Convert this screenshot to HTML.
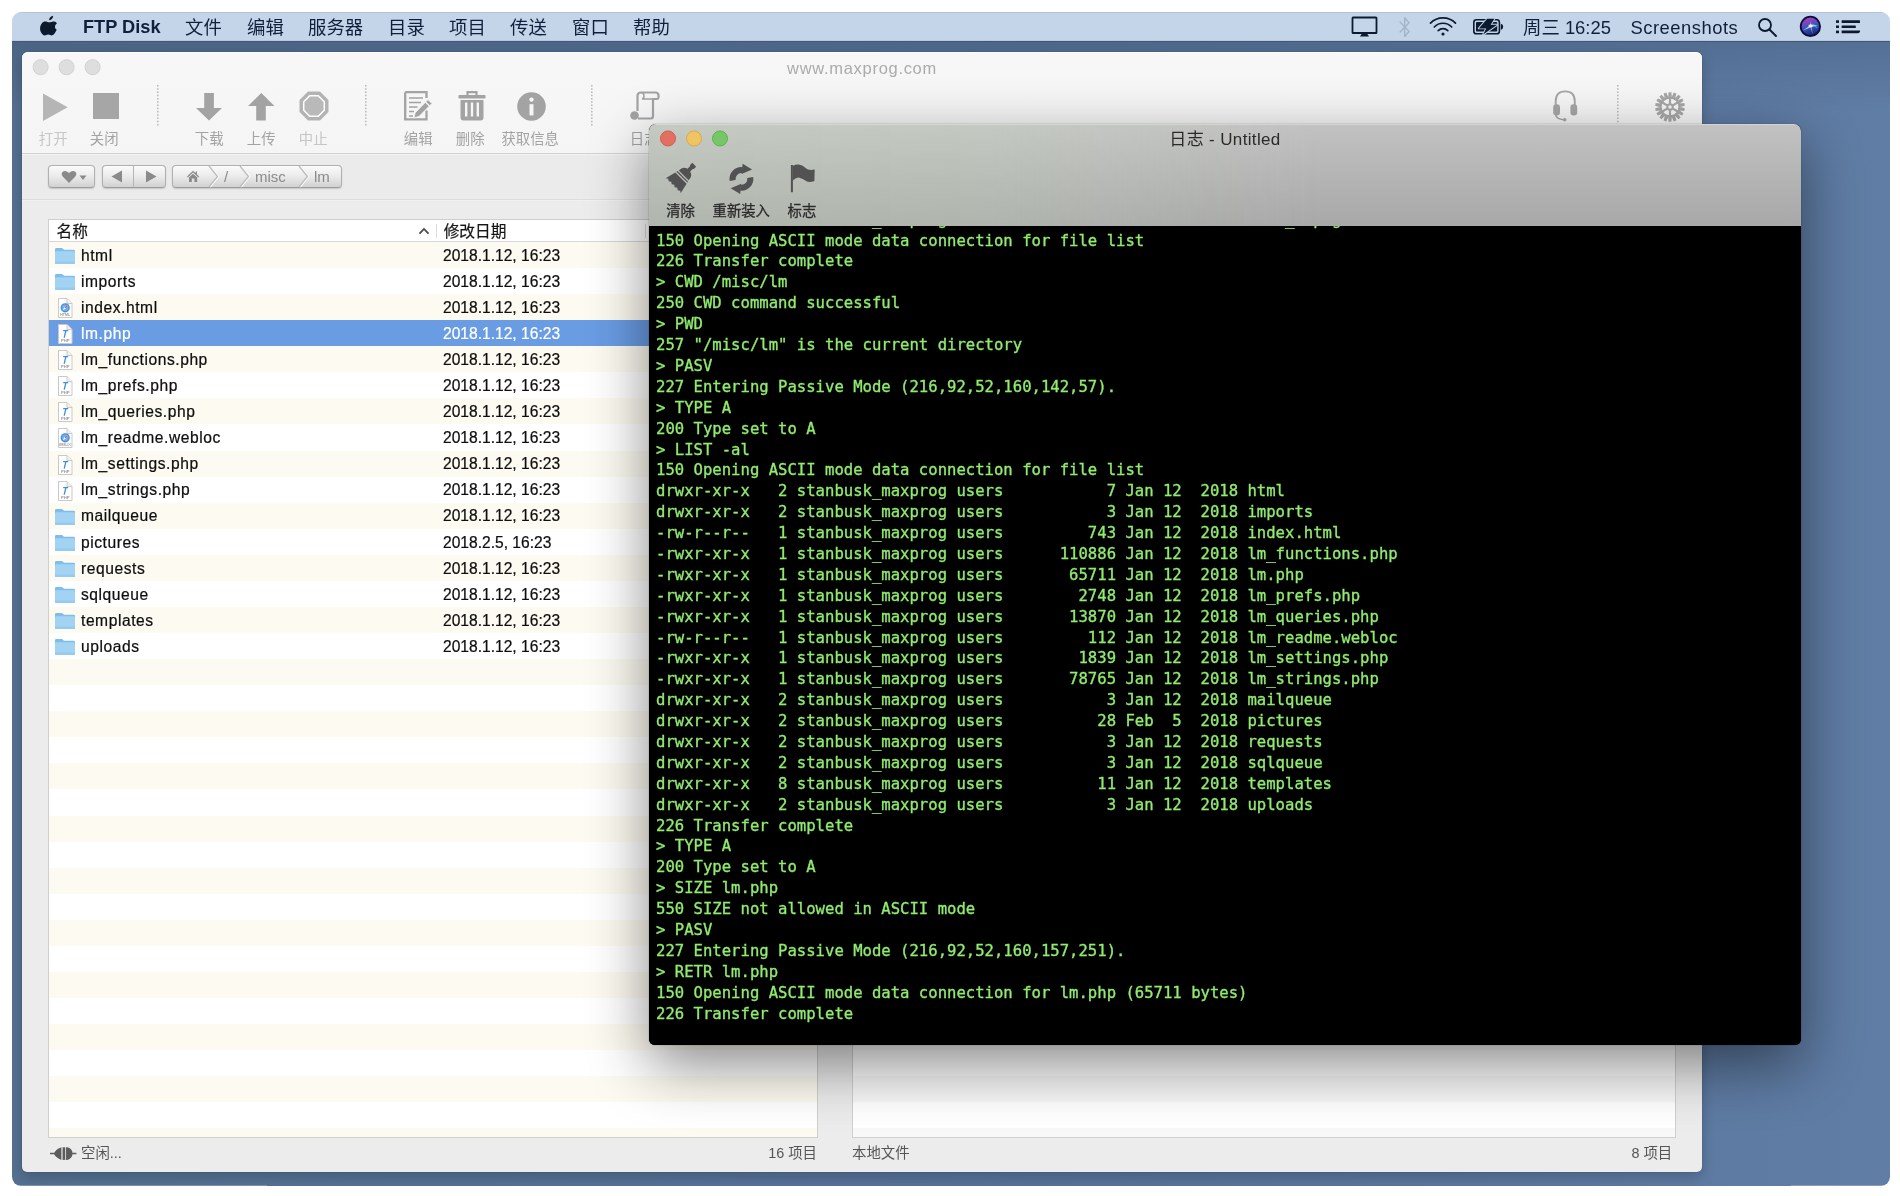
<!DOCTYPE html>
<html lang="zh-CN"><head><meta charset="utf-8"><title>FTP Disk</title>
<style>
html,body{margin:0;padding:0;background:#fff;}
body{width:1900px;height:1196px;position:relative;overflow:hidden;font-family:"Liberation Sans","Noto Sans CJK SC",sans-serif;color:#222;}
*{box-sizing:border-box;}
.abs,#screen *{position:absolute;}
#screen{will-change:transform;position:absolute;left:0;top:0;width:1900px;height:1196px;clip-path:inset(12px 10px 10.2px 12px round 9px);background:linear-gradient(180deg,rgba(10,20,40,.13) 41px,rgba(10,20,40,.10) 52px,rgba(10,20,40,0) 110px),linear-gradient(90deg,#557091 0%,#57739a 55%,#5b789f 80%,#607da5 100%);}
#screen svg{overflow:visible;}
#screen text, #screen tspan{position:static;}
/* menubar */
#menubar{left:12px;top:12px;width:1878px;height:29px;background:#c4d5e9;border-bottom:1px solid #b7c9de;border-top:1px solid #b3c4d9;box-shadow:0 1px 0 #435878;}
.mi{top:12.5px;height:29px;line-height:29px;font-size:18.4px;color:#10203a;white-space:nowrap;}
.mi.b{font-weight:bold;font-size:18.2px;}
/* main window */
#main{left:22px;top:52px;width:1680px;height:1119.6px;border-radius:6px 6px 5px 5px;background:#ececec;box-shadow:0 5px 14px rgba(0,0,0,.2),0 0 1px rgba(0,0,0,.45);}
#mainin{left:-22px;top:-52px;width:1900px;height:1196px;}
#mtop{left:22px;top:52px;width:1680px;height:102px;border-radius:6px 6px 0 0;background:linear-gradient(#f7f7f7,#f5f5f5);border-bottom:1px solid #d2d2d2;border-top:1px solid #fdfdfd;}
#mpath{left:22px;top:154px;width:1680px;height:46px;background:#ebebeb;border-bottom:1px solid #dddddd;box-shadow:0 1px 0 #f1f1f1;border-top:1px solid #f4f4f4;}
.tlm{width:15.6px;height:15.6px;border-radius:50%;background:#dedede;border:1px solid #d2d2d2;top:59px;transform:translate(-.4px,.2px);}
#mtitle{left:662px;top:56px;width:400px;text-align:center;font-size:16.5px;letter-spacing:.7px;color:#ababab;line-height:24px;white-space:nowrap;}
.tbl{top:127.8px;margin-left:-.8px;height:22px;line-height:22px;font-size:14.400px;color:#a3a3a3;text-align:center;width:80px;white-space:nowrap;}
.tbl.dis{color:#c6c6c6;}
.sep{width:1.5px;top:85px;height:41px;background:repeating-linear-gradient(#a9a9a9 0,#a9a9a9 1.7px,transparent 1.7px,transparent 3.26px);}
/* path buttons */
.pbtn{top:165px;height:23px;border-radius:4px;border:1px solid #b0b0b0;border-bottom-color:#9c9c9c;background:linear-gradient(#fbfbfb,#eaeaea 50%,#d2d2d2);box-shadow:0 1px 1.5px rgba(0,0,0,.16);}
.ptxt{top:165px;height:23px;line-height:23px;font-size:15px;color:#8a8a8a;}
/* file list */
#list{left:48px;top:219px;width:770px;height:919px;background:#fff;border:1px solid #cfcfcf;overflow:hidden;}
#rlist{left:852px;top:219px;width:824px;height:919px;background:#fff;border:1px solid #cfcfcf;overflow:hidden;}
#lhead{left:0;top:0;width:768px;height:22px;background:#fff;border-bottom:1px solid #d8d8d8;}
.hd{top:0;height:22px;line-height:23px;font-size:15.7px;color:#161616;-webkit-text-stroke:.2px #161616;}
.row{left:0;width:768px;height:26.07px;}
.row.odd{background:#fdfbf1;}
.row.sel{background:#6a9ce4;}
.row .fi{left:5px;top:3px;}
.row svg.fi[height="18"]{top:5.2px;left:5.3px;}
.row .nm{left:32px;top:.8px;letter-spacing:.56px;line-height:26px;font-size:15.6px;color:#0e0e0e;white-space:nowrap;}
.row .dt{left:394px;top:.8px;line-height:26px;font-size:15.6px;color:#0e0e0e;white-space:nowrap;}
.row .nm,.row .dt{-webkit-text-stroke:.22px #0e0e0e;}
.row.sel .nm,.row.sel .dt{color:#fff;-webkit-text-stroke:.22px #fff;}
.st{top:1142.3px;height:22px;line-height:22px;font-size:14.4px;color:#555;white-space:nowrap;}
/* log window */
#log{left:649px;top:124px;width:1152px;height:921px;border-radius:7px 7px 6px 6px;background:#000;box-shadow:0 20px 60px rgba(0,0,0,.47),0 0 1px rgba(0,0,0,.7);}
#login{left:0;top:0;width:1152px;height:921px;border-radius:7px 7px 6px 6px;overflow:hidden;}
#lhdr{left:0;top:0;width:1152px;height:102px;background:linear-gradient(#c2c2c2,#b6b6b6 45%,#a8a8a8);}
#lhdr2{left:0;top:0;width:1152px;height:102px;background:linear-gradient(90deg,rgba(205,228,195,.22) 0%,rgba(205,228,195,.2) 30%,rgba(205,228,195,0) 58%);border-top:1px solid rgba(255,255,255,.3);}
.tll{width:16px;height:16px;border-radius:50%;top:6px;transform:translateY(.45px);}
#ltitle{left:376px;top:4px;width:400px;text-align:center;font-size:17px;letter-spacing:.35px;color:#2a2a2a;line-height:24px;white-space:nowrap;}
.ltl{top:75.500px;height:22px;line-height:22px;font-size:14.300px;color:#2c2c2c;-webkit-text-stroke:.3px #2c2c2c;text-align:center;width:80px;white-space:nowrap;}
#term{left:0;top:102px;width:1152px;height:819px;background:#000;overflow:hidden;}
.tl{left:7px;height:20.89px;line-height:20.89px;font-family:"DejaVu Sans Mono","Liberation Mono",monospace;font-size:15.6px;color:#8fec6e;-webkit-text-stroke:.35px #8fec6e;white-space:pre;letter-spacing:0px;}

</style></head>
<body>
<div id="screen">
<div id="menubar"></div>
<svg style="left:40.200px;top:14.500px" width="19" height="22" viewBox="0 0 19 22"><path d="M13.2 0.6c.1 1.2-.4 2.4-1.1 3.2-.8.9-2 1.6-3.100 1.500-.1-1.200.5-2.400 1.200-3.100C11 1.300 12.300.700 13.200.600zM16.900 15.900c-.5 1.100-.7 1.600-1.400 2.600-.9 1.400-2.200 3.100-3.800 3.100-1.400 0-1.800-.9-3.700-.9s-2.400.9-3.800.9c-1.600 0-2.800-1.500-3.700-2.900C-2 14.800-.6 8.700 3.200 6.900c1.300-.6 2.400-.3 3.500.1.900.3 1.500.6 2.300.6.700 0 1.200-.2 2-.5 1.200-.5 2.600-.9 4.300-.1.800.3 1.500.9 2 1.700-2.900 1.700-2.600 5.900.4 7.200z" fill="#0c1a2e" transform="translate(0.8,0.3) scale(0.93)"/></svg>
<span class="mi b" style="left:83px">FTP Disk</span>
<span class="mi" style="left:185px">文件</span>
<span class="mi" style="left:247px">编辑</span>
<span class="mi" style="left:308px">服务器</span>
<span class="mi" style="left:388px">目录</span>
<span class="mi" style="left:449px">项目</span>
<span class="mi" style="left:510px">传送</span>
<span class="mi" style="left:572px">窗口</span>
<span class="mi" style="left:633px">帮助</span>
<!-- right status icons -->
<svg style="left:1351px;top:16px" width="27" height="22" viewBox="0 0 27 22"><rect x="1.500" y="1.500" width="24" height="15.500" rx="0.600" fill="none" stroke="#0c1a2e" stroke-width="1.800"/><path d="M9 20.500L11 17.500H16L18 20.500Z" fill="#0c1a2e"/></svg>
<svg style="left:1396.600px;top:15px" width="15.400" height="24.200" viewBox="0 0 14 22"><path d="M2.500 6L11 15L7 19.500V2.500L11 7L2.500 16" fill="none" stroke="#a3b4c8" stroke-width="1.250" stroke-linejoin="round"/></svg>
<svg style="left:1429px;top:15.200px" width="28" height="22" viewBox="0 0 28 22"><path d="M1.500 8.200A17.500 17.500 0 0 1 26.500 8.200" fill="none" stroke="#0c1a2e" stroke-width="1.700" stroke-linecap="round"/><path d="M5.300 12A12 12 0 0 1 22.700 12" fill="none" stroke="#0c1a2e" stroke-width="1.700" stroke-linecap="round"/><path d="M9.200 15.700A6.800 6.800 0 0 1 18.800 15.700" fill="none" stroke="#0c1a2e" stroke-width="1.700" stroke-linecap="round"/><circle cx="14" cy="19" r="1.600" fill="#0c1a2e"/></svg>
<svg style="left:1473.400px;top:18.700px" width="33" height="17" viewBox="0 0 33 17"><rect x="0.800" y="0.800" width="25.600" height="14" rx="2.600" fill="none" stroke="#0c1a2e" stroke-width="1.600"/><rect x="3" y="3" width="21.200" height="9.600" rx="0.800" fill="#0c1a2e"/><path d="M27.800 4.700Q30.200 5.400 30.200 7.800Q30.200 10.200 27.800 10.900Z" fill="#0c1a2e"/><path d="M14.200 -0.200H21.400L17.600 5.700H24.200L10.100 15.600L13.300 9.400H5.800Z" fill="#0c1a2e" stroke="#c4d5e9" stroke-width="1.900" paint-order="stroke" stroke-linejoin="round"/></svg>
<span class="mi" style="left:1523px">周三 16:25</span>
<span class="mi" style="left:1630.500px;letter-spacing:.5px">Screenshots</span>
<svg style="left:1757px;top:17px" width="21" height="21" viewBox="0 0 21 21"><circle cx="8" cy="8" r="6" fill="none" stroke="#0c1a2e" stroke-width="1.800"/><path d="M12.500 12.500L19 19" stroke="#0c1a2e" stroke-width="2" stroke-linecap="round"/></svg>
<svg style="left:1800px;top:16px" width="21" height="21" viewBox="0 0 21 21"><defs><linearGradient id="siri" x1="0.300" y1="0" x2="0.600" y2="1"><stop offset="0" stop-color="#b044b4"/><stop offset=".35" stop-color="#6a48c0"/><stop offset=".6" stop-color="#2c52b4"/><stop offset="1" stop-color="#171c6c"/></linearGradient></defs><circle cx="10.400" cy="10.400" r="9.700" fill="url(#siri)" stroke="#100b38" stroke-width="1.800"/><path d="M3.200 14.600Q7.500 11 10.300 9.600Q13.500 8.800 18 9.200Q14 10 11.500 11Q8 12 3.200 14.600Z" fill="#a8f0f4" opacity=".9"/><path d="M12.500 7.500Q16 8.800 17.800 12.200Q14.500 10.200 11 10Z" fill="#6fd8e0" opacity=".55"/><path d="M10.800 5Q11.200 9 12.800 18.200Q10.500 12 10 9.500Z" fill="#f0a0e0" opacity=".8"/><ellipse cx="10.600" cy="9.800" rx="2.200" ry="1.500" fill="#fff" opacity=".8"/></svg>
<svg style="left:1836px;top:19.700px" width="26" height="16" viewBox="0 0 26 16"><g fill="#0c1a2e"><rect x="0" y="0.300" width="3" height="2.600"/><rect x="0" y="5.500" width="3" height="2.500"/><rect x="0" y="10.600" width="3" height="2.600"/><rect x="5.600" y="0.300" width="18.400" height="2.600" rx="0.500"/><rect x="5.600" y="5.500" width="14.200" height="2.500" rx="0.500"/><path d="M5.600 10.600H24V11.600Q23.600 13.200 22 13.200H5.600Z"/></g></svg>

<div id="main"><div id="mainin">
<div id="mtop"></div>
<div id="mpath"></div>
<div class="tlm" style="left:33px"></div><div class="tlm" style="left:59px"></div><div class="tlm" style="left:85px"></div>
<div id="mtitle">www.maxprog.com</div>
<!-- toolbar icons -->
<svg style="left:43px;top:93px" width="26" height="29" viewBox="0 0 26 29"><path d="M0 0.500L24.700 14.300L0 28Z" fill="#b5b5b5"/></svg>
<svg style="left:93px;top:93px" width="26" height="26" viewBox="0 0 26 26"><rect width="26" height="26" fill="#a6a6a6"/></svg>
<svg style="left:156.5px;top:85px" width="2" height="42" viewBox="0 0 2 42"><line x1="0.800" y1="0" x2="0.800" y2="41" stroke="#b2b2b2" stroke-width="1.400" stroke-dasharray="1.500 1.760"/></svg>
<svg style="left:196px;top:93px" width="26" height="28" viewBox="0 0 26 28"><path d="M8.200 0H17.900V15H26L13 27.600L0 15H8.200Z" fill="#a3a3a3"/></svg>
<svg style="left:248px;top:93px" width="27" height="28" viewBox="0 0 27 28"><path d="M13.300 0L26.500 13H17.800V27.600H8.200V13H0Z" fill="#a3a3a3"/></svg>
<svg style="left:299px;top:91px" width="30" height="30" viewBox="0 0 30 30"><path d="M9 0.500H21L29.500 9V21L21 29.500H9L0.500 21V9Z" fill="#b3b3b3"/><path d="M10.700 4.700H19.300L25.300 10.700V19.300L19.300 25.300H10.700L4.700 19.300V10.700Z" fill="#b9b9b9" stroke="#fff" stroke-width="1.500"/></svg>
<svg style="left:365.0px;top:85px" width="2" height="42" viewBox="0 0 2 42"><line x1="0.800" y1="0" x2="0.800" y2="41" stroke="#b2b2b2" stroke-width="1.400" stroke-dasharray="1.500 1.760"/></svg>
<!-- edit -->
<svg style="left:404px;top:91px" width="30" height="30" viewBox="0 0 30 30"><path d="M1.200 1.200H22.500V7M22.500 19.500V28.300H1.200V1.200" fill="none" stroke="#a3a3a3" stroke-width="2.300"/><path d="M5 7H19M5 11.500H17M5 16H13.500M5 20.500H10M5 25H9" stroke="#a3a3a3" stroke-width="1.700"/><path d="M24 8.500L28 12.500L15 25.500L9.800 27L11.200 21.700Z" fill="#a3a3a3" stroke="#f6f6f6" stroke-width="1"/><path d="M21.500 11L25.500 15" stroke="#f6f6f6" stroke-width="1.200"/></svg>
<!-- trash -->
<svg style="left:458px;top:91px" width="28" height="30" viewBox="0 0 28 30"><path d="M9.500 4.200V1.200H18.500V4.200" fill="none" stroke="#a3a3a3" stroke-width="2.200"/><rect x="0.500" y="4" width="27" height="3.600" rx="0.800" fill="#a3a3a3"/><path d="M2.500 9H25.500V26.500Q25.500 29.500 22.500 29.500H5.500Q2.500 29.500 2.500 26.500Z" fill="#a3a3a3"/><path d="M8.200 11.500V25.500M14 11.500V25.500M19.800 11.500V25.500" stroke="#f6f6f6" stroke-width="2.400"/></svg>
<!-- info -->
<svg style="left:517px;top:92px" width="29" height="29" viewBox="0 0 29 29"><circle cx="14.500" cy="14.500" r="14.300" fill="#a3a3a3"/><circle cx="14.500" cy="7.600" r="2.200" fill="#f6f6f6"/><rect x="12.500" y="12.200" width="4" height="11.200" fill="#f6f6f6"/></svg>
<svg style="left:591.0px;top:85px" width="2" height="42" viewBox="0 0 2 42"><line x1="0.800" y1="0" x2="0.800" y2="41" stroke="#b2b2b2" stroke-width="1.400" stroke-dasharray="1.500 1.760"/></svg>
<!-- scroll/log -->
<svg style="left:630px;top:91px" width="30" height="30" viewBox="0 0 30 30"><path d="M8 27.500H21Q23 27.500 23 25V8H27Q28.600 8 28.600 5Q28.600 1.500 25.500 1.500H11Q7.500 1.500 7.500 5V20" fill="none" stroke="#a3a3a3" stroke-width="2.200"/><circle cx="4.500" cy="24.500" r="4.300" fill="#a3a3a3"/><path d="M11 1.500Q14 2 14 5Q14 7.500 12 8H23" fill="none" stroke="#a3a3a3" stroke-width="1.600"/></svg>
<span class="tbl dis" style="left:14px">打开</span>
<span class="tbl" style="left:65px">关闭</span>
<span class="tbl" style="left:170px">下载</span>
<span class="tbl" style="left:222px">上传</span>
<span class="tbl dis" style="left:274px">中止</span>
<span class="tbl" style="left:379px">编辑</span>
<span class="tbl" style="left:431px">删除</span>
<span class="tbl" style="left:491px">获取信息</span>
<span class="tbl" style="left:605px">日志</span>
<!-- headphones & gear -->
<svg style="left:1551px;top:90px" width="30" height="32" viewBox="0 0 30 32"><path d="M4.700 17V11.500Q4.700 1.400 14.250 1.400Q23.800 1.400 23.800 11.500V17" fill="none" stroke="#a6a6a6" stroke-width="1.900"/><rect x="2.200" y="14.200" width="6.800" height="11.200" rx="3.200" fill="#a6a6a6"/><rect x="19.400" y="14.200" width="6.800" height="11.200" rx="3.200" fill="#a6a6a6"/><path d="M4.500 24Q5 29.300 12.500 29.700" fill="none" stroke="#a6a6a6" stroke-width="1.500"/><circle cx="13.700" cy="29.800" r="1.800" fill="#a6a6a6"/></svg>
<svg style="left:1617.0px;top:85px" width="2" height="42" viewBox="0 0 2 42"><line x1="0.800" y1="0" x2="0.800" y2="41" stroke="#b2b2b2" stroke-width="1.400" stroke-dasharray="1.500 1.760"/></svg>
<svg style="left:1654.500px;top:91.600px" width="30" height="30" viewBox="0 0 32 32"><g transform="translate(16,16)"><circle r="10.200" fill="none" stroke="#a6a6a6" stroke-width="2.600"/><g fill="#a6a6a6"><g id="tooth"><path d="M-1.500 -15.800H1.500L1.900 -11H-1.900Z"/></g><use href="#tooth" transform="rotate(20)"/><use href="#tooth" transform="rotate(40)"/><use href="#tooth" transform="rotate(60)"/><use href="#tooth" transform="rotate(80)"/><use href="#tooth" transform="rotate(100)"/><use href="#tooth" transform="rotate(120)"/><use href="#tooth" transform="rotate(140)"/><use href="#tooth" transform="rotate(160)"/><use href="#tooth" transform="rotate(180)"/><use href="#tooth" transform="rotate(200)"/><use href="#tooth" transform="rotate(220)"/><use href="#tooth" transform="rotate(240)"/><use href="#tooth" transform="rotate(260)"/><use href="#tooth" transform="rotate(280)"/><use href="#tooth" transform="rotate(300)"/><use href="#tooth" transform="rotate(320)"/><use href="#tooth" transform="rotate(340)"/></g><circle r="2.900" fill="none" stroke="#a6a6a6" stroke-width="2"/><path d="M0 -9.500V-3.500M0 9.500V3.500M8.200 -4.750L3 -1.750M-8.200 -4.750L-3 -1.750M8.200 4.750L3 1.750M-8.200 4.750L-3 1.750" stroke="#a6a6a6" stroke-width="2.300"/></g></svg>

<!-- path bar buttons -->
<div class="pbtn" style="left:48px;width:47px"></div>
<svg style="left:61px;top:170px" width="26" height="14" viewBox="0 0 26 14"><path d="M8 13L1.700 6.500Q-.3 3.800 1.700 1.800Q4.500-.4 8 3Q11.500-.4 14.300 1.800Q16.300 3.800 14.300 6.500Z" fill="#8a8a8a"/><path d="M18.500 5.500H25.500L22 10Z" fill="#8a8a8a"/></svg>
<div class="pbtn" style="left:102px;width:64px"></div>
<div style="left:132.700px;top:166px;width:1px;height:21px;background:#b4b4b4"></div>
<svg style="left:111px;top:170px" width="12" height="13" viewBox="0 0 12 13"><path d="M11 0.500V12.500L0.500 6.500Z" fill="#8a8a8a"/></svg>
<svg style="left:145px;top:170px" width="12" height="13" viewBox="0 0 12 13"><path d="M1 0.500V12.500L11.500 6.500Z" fill="#8a8a8a"/></svg>
<div class="pbtn" style="left:172px;width:170px"></div>
<svg style="left:187px;top:170px" width="12.200" height="12.800" viewBox="0 0 14 14"><path d="M7 0.500L0 7.200L1 8.200L7 2.600L13 8.200L14 7.200L11.500 4.800V1.500H10V3.400Z" fill="#8a8a8a"/><path d="M2.300 8.200L7 3.900L11.700 8.200V13.500H8.500V9.500H5.500V13.500H2.300Z" fill="#8a8a8a"/></svg>
<svg style="left:207.5px;top:166px" width="12" height="21" viewBox="0 0 12 21"><path d="M2.300 0L10.800 10.500L2.300 21" fill="none" stroke="#fbfbfb" stroke-width="1.300"/><path d="M1 0L9.500 10.500L1 21" fill="none" stroke="#bcbcbc" stroke-width="1.300"/></svg>
<svg style="left:238.5px;top:166px" width="12" height="21" viewBox="0 0 12 21"><path d="M2.300 0L10.800 10.500L2.300 21" fill="none" stroke="#fbfbfb" stroke-width="1.300"/><path d="M1 0L9.500 10.500L1 21" fill="none" stroke="#bcbcbc" stroke-width="1.300"/></svg>
<svg style="left:297.5px;top:166px" width="12" height="21" viewBox="0 0 12 21"><path d="M2.300 0L10.800 10.500L2.300 21" fill="none" stroke="#fbfbfb" stroke-width="1.300"/><path d="M1 0L9.500 10.500L1 21" fill="none" stroke="#bcbcbc" stroke-width="1.300"/></svg>
<span class="ptxt" style="left:224px">/</span>
<span class="ptxt" style="left:255px">misc</span>
<span class="ptxt" style="left:314px">lm</span>

<!-- file list -->
<div id="list">
<div id="lhead"></div>
<span class="hd" style="left:7.500px">名称</span>
<svg style="left:369px;top:7px" width="12" height="8" viewBox="0 0 12 8"><path d="M1.500 6.700L6 2L10.500 6.700" fill="none" stroke="#4a4a4a" stroke-width="1.800"/></svg>
<div style="left:386.600px;top:4px;width:1px;height:14px;background:#dcdcdc"></div><div style="left:595.500px;top:4px;width:1px;height:14px;background:#dcdcdc"></div>
<span class="hd" style="left:394.700px">修改日期</span>
<div class="row odd" style="top:22.00px"><svg class="fi" width="22" height="18" viewBox="0 0 22 18"><path d="M1 2.2Q1 1 2.2 1H7.6Q8.4 1 9 1.7L10 2.8H19.8Q21 2.8 21 4V15.8Q21 17 19.8 17H2.2Q1 17 1 15.8Z" fill="#7fbdea"/><path d="M1 5.2Q1 4.2 2.2 4.2H19.8Q21 4.2 21 5.2V15.8Q21 17 19.8 17H2.2Q1 17 1 15.8Z" fill="#a3d3f3"/><path d="M1 14.5H21V15.8Q21 17 19.8 17H2.2Q1 17 1 15.8Z" fill="#8cc6ee" opacity=".6"/></svg><span class="nm">html</span><span class="dt">2018.1.12, 16:23</span></div>
<div class="row" style="top:48.07px"><svg class="fi" width="22" height="18" viewBox="0 0 22 18"><path d="M1 2.2Q1 1 2.2 1H7.6Q8.4 1 9 1.7L10 2.8H19.8Q21 2.8 21 4V15.8Q21 17 19.8 17H2.2Q1 17 1 15.8Z" fill="#7fbdea"/><path d="M1 5.2Q1 4.2 2.2 4.2H19.8Q21 4.2 21 5.2V15.8Q21 17 19.8 17H2.2Q1 17 1 15.8Z" fill="#a3d3f3"/><path d="M1 14.5H21V15.8Q21 17 19.8 17H2.2Q1 17 1 15.8Z" fill="#8cc6ee" opacity=".6"/></svg><span class="nm">imports</span><span class="dt">2018.1.12, 16:23</span></div>
<div class="row odd" style="top:74.14px"><svg class="fi" width="22" height="22" viewBox="0 0 22 22"><path d="M4.5 1.5H13L18 6.5V20.5H4.5Z" fill="#fff" stroke="#c9c9c9" stroke-width="1"/><path d="M13 1.5V6.5H18" fill="#f1f1f1" stroke="#c9c9c9" stroke-width="1"/><circle cx="11.2" cy="10.8" r="4.6" fill="#3f8fe0"/><circle cx="11.2" cy="10.8" r="3.3" fill="#6db3f2"/><path d="M13.6 8.4L10.5 10.1L8.8 13.2L11.9 11.5Z" fill="#fff"/><path d="M13.6 8.4L10.5 10.1L11.9 11.5Z" fill="#e8463a"/><text x="11.2" y="19.4" font-size="3.6" font-family="Liberation Sans, sans-serif" fill="#999" text-anchor="middle" font-weight="bold">HTML</text></svg><span class="nm">index.html</span><span class="dt">2018.1.12, 16:23</span></div>
<div class="row sel" style="top:100.21px"><svg class="fi" width="22" height="22" viewBox="0 0 22 22"><path d="M4.5 1.5H13L18 6.5V20.5H4.5Z" fill="#fff" stroke="#c9c9c9" stroke-width="1"/><path d="M13 1.5V6.5H18" fill="#f1f1f1" stroke="#c9c9c9" stroke-width="1"/><path d="M9.2 7.6H14.2M11.9 7.6L10.2 14.6" stroke="#3b8fd6" stroke-width="1.3" fill="none"/><text x="11.2" y="19.2" font-size="4.2" font-family="Liberation Sans, sans-serif" fill="#999" text-anchor="middle" font-weight="bold">PHP</text></svg><span class="nm">lm.php</span><span class="dt">2018.1.12, 16:23</span></div>
<div class="row odd" style="top:126.28px"><svg class="fi" width="22" height="22" viewBox="0 0 22 22"><path d="M4.5 1.5H13L18 6.5V20.5H4.5Z" fill="#fff" stroke="#c9c9c9" stroke-width="1"/><path d="M13 1.5V6.5H18" fill="#f1f1f1" stroke="#c9c9c9" stroke-width="1"/><path d="M9.2 7.6H14.2M11.9 7.6L10.2 14.6" stroke="#3b8fd6" stroke-width="1.3" fill="none"/><text x="11.2" y="19.2" font-size="4.2" font-family="Liberation Sans, sans-serif" fill="#999" text-anchor="middle" font-weight="bold">PHP</text></svg><span class="nm">lm_functions.php</span><span class="dt">2018.1.12, 16:23</span></div>
<div class="row" style="top:152.35px"><svg class="fi" width="22" height="22" viewBox="0 0 22 22"><path d="M4.5 1.5H13L18 6.5V20.5H4.5Z" fill="#fff" stroke="#c9c9c9" stroke-width="1"/><path d="M13 1.5V6.5H18" fill="#f1f1f1" stroke="#c9c9c9" stroke-width="1"/><path d="M9.2 7.6H14.2M11.9 7.6L10.2 14.6" stroke="#3b8fd6" stroke-width="1.3" fill="none"/><text x="11.2" y="19.2" font-size="4.2" font-family="Liberation Sans, sans-serif" fill="#999" text-anchor="middle" font-weight="bold">PHP</text></svg><span class="nm">lm_prefs.php</span><span class="dt">2018.1.12, 16:23</span></div>
<div class="row odd" style="top:178.42px"><svg class="fi" width="22" height="22" viewBox="0 0 22 22"><path d="M4.5 1.5H13L18 6.5V20.5H4.5Z" fill="#fff" stroke="#c9c9c9" stroke-width="1"/><path d="M13 1.5V6.5H18" fill="#f1f1f1" stroke="#c9c9c9" stroke-width="1"/><path d="M9.2 7.6H14.2M11.9 7.6L10.2 14.6" stroke="#3b8fd6" stroke-width="1.3" fill="none"/><text x="11.2" y="19.2" font-size="4.2" font-family="Liberation Sans, sans-serif" fill="#999" text-anchor="middle" font-weight="bold">PHP</text></svg><span class="nm">lm_queries.php</span><span class="dt">2018.1.12, 16:23</span></div>
<div class="row" style="top:204.49px"><svg class="fi" width="22" height="22" viewBox="0 0 22 22"><path d="M4.5 1.5H13L18 6.5V20.5H4.5Z" fill="#fff" stroke="#c9c9c9" stroke-width="1"/><path d="M13 1.5V6.5H18" fill="#f1f1f1" stroke="#c9c9c9" stroke-width="1"/><circle cx="11.2" cy="10.8" r="4.6" fill="#3f8fe0"/><circle cx="11.2" cy="10.8" r="3.3" fill="#6db3f2"/><path d="M13.6 8.4L10.5 10.1L8.8 13.2L11.9 11.5Z" fill="#fff"/><path d="M13.6 8.4L10.5 10.1L11.9 11.5Z" fill="#e8463a"/><text x="11.2" y="19.4" font-size="2.8" font-family="Liberation Sans, sans-serif" fill="#999" text-anchor="middle" font-weight="bold">WEBLOC</text></svg><span class="nm">lm_readme.webloc</span><span class="dt">2018.1.12, 16:23</span></div>
<div class="row odd" style="top:230.56px"><svg class="fi" width="22" height="22" viewBox="0 0 22 22"><path d="M4.5 1.5H13L18 6.5V20.5H4.5Z" fill="#fff" stroke="#c9c9c9" stroke-width="1"/><path d="M13 1.5V6.5H18" fill="#f1f1f1" stroke="#c9c9c9" stroke-width="1"/><path d="M9.2 7.6H14.2M11.9 7.6L10.2 14.6" stroke="#3b8fd6" stroke-width="1.3" fill="none"/><text x="11.2" y="19.2" font-size="4.2" font-family="Liberation Sans, sans-serif" fill="#999" text-anchor="middle" font-weight="bold">PHP</text></svg><span class="nm">lm_settings.php</span><span class="dt">2018.1.12, 16:23</span></div>
<div class="row" style="top:256.63px"><svg class="fi" width="22" height="22" viewBox="0 0 22 22"><path d="M4.5 1.5H13L18 6.5V20.5H4.5Z" fill="#fff" stroke="#c9c9c9" stroke-width="1"/><path d="M13 1.5V6.5H18" fill="#f1f1f1" stroke="#c9c9c9" stroke-width="1"/><path d="M9.2 7.6H14.2M11.9 7.6L10.2 14.6" stroke="#3b8fd6" stroke-width="1.3" fill="none"/><text x="11.2" y="19.2" font-size="4.2" font-family="Liberation Sans, sans-serif" fill="#999" text-anchor="middle" font-weight="bold">PHP</text></svg><span class="nm">lm_strings.php</span><span class="dt">2018.1.12, 16:23</span></div>
<div class="row odd" style="top:282.70px"><svg class="fi" width="22" height="18" viewBox="0 0 22 18"><path d="M1 2.2Q1 1 2.2 1H7.6Q8.4 1 9 1.7L10 2.8H19.8Q21 2.8 21 4V15.8Q21 17 19.8 17H2.2Q1 17 1 15.8Z" fill="#7fbdea"/><path d="M1 5.2Q1 4.2 2.2 4.2H19.8Q21 4.2 21 5.2V15.8Q21 17 19.8 17H2.2Q1 17 1 15.8Z" fill="#a3d3f3"/><path d="M1 14.5H21V15.8Q21 17 19.8 17H2.2Q1 17 1 15.8Z" fill="#8cc6ee" opacity=".6"/></svg><span class="nm">mailqueue</span><span class="dt">2018.1.12, 16:23</span></div>
<div class="row" style="top:308.77px"><svg class="fi" width="22" height="18" viewBox="0 0 22 18"><path d="M1 2.2Q1 1 2.2 1H7.6Q8.4 1 9 1.7L10 2.8H19.8Q21 2.8 21 4V15.8Q21 17 19.8 17H2.2Q1 17 1 15.8Z" fill="#7fbdea"/><path d="M1 5.2Q1 4.2 2.2 4.2H19.8Q21 4.2 21 5.2V15.8Q21 17 19.8 17H2.2Q1 17 1 15.8Z" fill="#a3d3f3"/><path d="M1 14.5H21V15.8Q21 17 19.8 17H2.2Q1 17 1 15.8Z" fill="#8cc6ee" opacity=".6"/></svg><span class="nm">pictures</span><span class="dt">2018.2.5, 16:23</span></div>
<div class="row odd" style="top:334.84px"><svg class="fi" width="22" height="18" viewBox="0 0 22 18"><path d="M1 2.2Q1 1 2.2 1H7.6Q8.4 1 9 1.7L10 2.8H19.8Q21 2.8 21 4V15.8Q21 17 19.8 17H2.2Q1 17 1 15.8Z" fill="#7fbdea"/><path d="M1 5.2Q1 4.2 2.2 4.2H19.8Q21 4.2 21 5.2V15.8Q21 17 19.8 17H2.2Q1 17 1 15.8Z" fill="#a3d3f3"/><path d="M1 14.5H21V15.8Q21 17 19.8 17H2.2Q1 17 1 15.8Z" fill="#8cc6ee" opacity=".6"/></svg><span class="nm">requests</span><span class="dt">2018.1.12, 16:23</span></div>
<div class="row" style="top:360.91px"><svg class="fi" width="22" height="18" viewBox="0 0 22 18"><path d="M1 2.2Q1 1 2.2 1H7.6Q8.4 1 9 1.7L10 2.8H19.8Q21 2.8 21 4V15.8Q21 17 19.8 17H2.2Q1 17 1 15.8Z" fill="#7fbdea"/><path d="M1 5.2Q1 4.2 2.2 4.2H19.8Q21 4.2 21 5.2V15.8Q21 17 19.8 17H2.2Q1 17 1 15.8Z" fill="#a3d3f3"/><path d="M1 14.5H21V15.8Q21 17 19.8 17H2.2Q1 17 1 15.8Z" fill="#8cc6ee" opacity=".6"/></svg><span class="nm">sqlqueue</span><span class="dt">2018.1.12, 16:23</span></div>
<div class="row odd" style="top:386.98px"><svg class="fi" width="22" height="18" viewBox="0 0 22 18"><path d="M1 2.2Q1 1 2.2 1H7.6Q8.4 1 9 1.7L10 2.8H19.8Q21 2.8 21 4V15.8Q21 17 19.8 17H2.2Q1 17 1 15.8Z" fill="#7fbdea"/><path d="M1 5.2Q1 4.2 2.2 4.2H19.8Q21 4.2 21 5.2V15.8Q21 17 19.8 17H2.2Q1 17 1 15.8Z" fill="#a3d3f3"/><path d="M1 14.5H21V15.8Q21 17 19.8 17H2.2Q1 17 1 15.8Z" fill="#8cc6ee" opacity=".6"/></svg><span class="nm">templates</span><span class="dt">2018.1.12, 16:23</span></div>
<div class="row" style="top:413.05px"><svg class="fi" width="22" height="18" viewBox="0 0 22 18"><path d="M1 2.2Q1 1 2.2 1H7.6Q8.4 1 9 1.7L10 2.8H19.8Q21 2.8 21 4V15.8Q21 17 19.8 17H2.2Q1 17 1 15.8Z" fill="#7fbdea"/><path d="M1 5.2Q1 4.2 2.2 4.2H19.8Q21 4.2 21 5.2V15.8Q21 17 19.8 17H2.2Q1 17 1 15.8Z" fill="#a3d3f3"/><path d="M1 14.5H21V15.8Q21 17 19.8 17H2.2Q1 17 1 15.8Z" fill="#8cc6ee" opacity=".6"/></svg><span class="nm">uploads</span><span class="dt">2018.1.12, 16:23</span></div>
<div class="row odd" style="top:439.12px"></div>
<div class="row odd" style="top:491.26px"></div>
<div class="row odd" style="top:543.40px"></div>
<div class="row odd" style="top:595.54px"></div>
<div class="row odd" style="top:647.68px"></div>
<div class="row odd" style="top:699.82px"></div>
<div class="row odd" style="top:751.96px"></div>
<div class="row odd" style="top:804.10px"></div>
<div class="row odd" style="top:856.24px"></div>
<div class="row odd" style="top:908.38px"></div>
</div>
<div id="rlist">
<div id="rstripes" style="left:0;top:22px;width:822px;height:900px;background:repeating-linear-gradient(#f8f8f8 0,#f8f8f8 26.07px,#fff 26.07px,#fff 52.14px)"></div>
</div>
<!-- status bar -->
<svg style="left:49.600px;top:1147.300px" width="26.400" height="13.200" viewBox="0 0 26 13"><path d="M0 6.500H5M21 6.500H26" stroke="#5c5c5c" stroke-width="1.500"/><path d="M4 6.500Q5 2.500 11.200 0.300V12.700Q5 10.500 4 6.500Z" fill="#5c5c5c"/><rect x="12.400" y="0.300" width="2.600" height="12.400" fill="#5c5c5c"/><path d="M15.800 0.300H17Q22.200 1.500 22.200 6.500Q22.200 11.500 17 12.700H15.800Z" fill="#5c5c5c"/></svg>
<span class="st" style="left:81px">空闲...</span>
<span class="st" style="left:717px;width:100px;text-align:right">16 项目</span>
<span class="st" style="left:852px">本地文件</span>
<span class="st" style="left:1572.200px;width:100px;text-align:right">8 项目</span>
</div></div>

<!-- log window -->
<div id="log"><div id="login">
<div id="lhdr"></div><div id="lhdr2"></div>
<div class="tll" style="left:11px;background:#e36f61;border:1px solid #cf5b4e"></div>
<div class="tll" style="left:37px;background:#f0c363;border:1px solid #d9a94a"></div>
<div class="tll" style="left:63px;background:#76c766;border:1px solid #5fb04f"></div>
<div id="ltitle">日志 - Untitled</div>
<!-- broom -->
<svg style="left:0;top:0" width="200" height="102" viewBox="0 0 200 102"><g fill="#525252">
<g transform="translate(34.700,51.300) rotate(45)">
<path d="M-2.700 -14.900H2.700V-11.600L1.900 -10.800V-6.500H-1.900V-10.800L-2.700 -11.600Z"/>
<path d="M-6.900 0Q-7 -6 -1.900 -7.200H1.900Q7 -6 6.900 0Z"/>
<path d="M-7.400 1.300H7.400L7.700 2.600H-7.700Z"/>
<path d="M-8 3.900H8L10.600 14.900L8.500 13.300L6.400 14.900L4.300 13.300L2.100 14.900L0 13.300L-2.100 14.900L-4.300 13.300L-6.400 14.900L-8.500 13.300L-10.600 14.900Z"/>
</g>
<g transform="translate(92.400,54.900)">
<path d="M-8.800 1.500A8.800 8.800 0 0 1 1 -8.700" fill="none" stroke="#525252" stroke-width="6"/>
<path d="M1.200 -15.200L10.700 -9.400L0.200 -4.800Z"/>
<path d="M8.800 -1.500A8.800 8.800 0 0 1 -1 8.700" fill="none" stroke="#525252" stroke-width="6"/>
<path d="M-1.200 15.200L-10.700 9.400L-0.200 4.800Z"/>
</g>
<rect x="141.900" y="41" width="2" height="27.200"/>
<path d="M143.900 41.800Q147.500 40.200 150.500 40.700Q154 41.200 156.500 44Q159.400 46.800 165.700 45.500L165.400 57.100Q160.500 58.800 157.500 57.300Q154.500 55 150.500 53.700Q147.500 53 143.900 56.500Z"/>
</g></svg>
<span class="ltl" style="left:-8.500px">清除</span>
<span class="ltl" style="left:52.200px">重新装入</span>
<span class="ltl" style="left:112.900px">标志</span>
<div id="term">
<div class="tl" style="top:-16.29px">drwxr-xr-x   2 stanbusk_maxprog users           3 Jan 12  2018 main_supng</div>
<div class="tl" style="top:4.60px">150 Opening ASCII mode data connection for file list</div>
<div class="tl" style="top:25.49px">226 Transfer complete</div>
<div class="tl" style="top:46.38px">&gt; CWD /misc/lm</div>
<div class="tl" style="top:67.27px">250 CWD command successful</div>
<div class="tl" style="top:88.16px">&gt; PWD</div>
<div class="tl" style="top:109.05px">257 &quot;/misc/lm&quot; is the current directory</div>
<div class="tl" style="top:129.94px">&gt; PASV</div>
<div class="tl" style="top:150.83px">227 Entering Passive Mode (216,92,52,160,142,57).</div>
<div class="tl" style="top:171.72px">&gt; TYPE A</div>
<div class="tl" style="top:192.61px">200 Type set to A</div>
<div class="tl" style="top:213.50px">&gt; LIST -al</div>
<div class="tl" style="top:234.39px">150 Opening ASCII mode data connection for file list</div>
<div class="tl" style="top:255.28px">drwxr-xr-x   2 stanbusk_maxprog users           7 Jan 12  2018 html</div>
<div class="tl" style="top:276.17px">drwxr-xr-x   2 stanbusk_maxprog users           3 Jan 12  2018 imports</div>
<div class="tl" style="top:297.06px">-rw-r--r--   1 stanbusk_maxprog users         743 Jan 12  2018 index.html</div>
<div class="tl" style="top:317.95px">-rwxr-xr-x   1 stanbusk_maxprog users      110886 Jan 12  2018 lm_functions.php</div>
<div class="tl" style="top:338.84px">-rwxr-xr-x   1 stanbusk_maxprog users       65711 Jan 12  2018 lm.php</div>
<div class="tl" style="top:359.73px">-rwxr-xr-x   1 stanbusk_maxprog users        2748 Jan 12  2018 lm_prefs.php</div>
<div class="tl" style="top:380.62px">-rwxr-xr-x   1 stanbusk_maxprog users       13870 Jan 12  2018 lm_queries.php</div>
<div class="tl" style="top:401.51px">-rw-r--r--   1 stanbusk_maxprog users         112 Jan 12  2018 lm_readme.webloc</div>
<div class="tl" style="top:422.40px">-rwxr-xr-x   1 stanbusk_maxprog users        1839 Jan 12  2018 lm_settings.php</div>
<div class="tl" style="top:443.29px">-rwxr-xr-x   1 stanbusk_maxprog users       78765 Jan 12  2018 lm_strings.php</div>
<div class="tl" style="top:464.18px">drwxr-xr-x   2 stanbusk_maxprog users           3 Jan 12  2018 mailqueue</div>
<div class="tl" style="top:485.07px">drwxr-xr-x   2 stanbusk_maxprog users          28 Feb  5  2018 pictures</div>
<div class="tl" style="top:505.96px">drwxr-xr-x   2 stanbusk_maxprog users           3 Jan 12  2018 requests</div>
<div class="tl" style="top:526.85px">drwxr-xr-x   2 stanbusk_maxprog users           3 Jan 12  2018 sqlqueue</div>
<div class="tl" style="top:547.74px">drwxr-xr-x   8 stanbusk_maxprog users          11 Jan 12  2018 templates</div>
<div class="tl" style="top:568.63px">drwxr-xr-x   2 stanbusk_maxprog users           3 Jan 12  2018 uploads</div>
<div class="tl" style="top:589.52px">226 Transfer complete</div>
<div class="tl" style="top:610.41px">&gt; TYPE A</div>
<div class="tl" style="top:631.30px">200 Type set to A</div>
<div class="tl" style="top:652.19px">&gt; SIZE lm.php</div>
<div class="tl" style="top:673.08px">550 SIZE not allowed in ASCII mode</div>
<div class="tl" style="top:693.97px">&gt; PASV</div>
<div class="tl" style="top:714.86px">227 Entering Passive Mode (216,92,52,160,157,251).</div>
<div class="tl" style="top:735.75px">&gt; RETR lm.php</div>
<div class="tl" style="top:756.64px">150 Opening ASCII mode data connection for lm.php (65711 bytes)</div>
<div class="tl" style="top:777.53px">226 Transfer complete</div>
</div>
</div></div>
</div>

</body></html>
